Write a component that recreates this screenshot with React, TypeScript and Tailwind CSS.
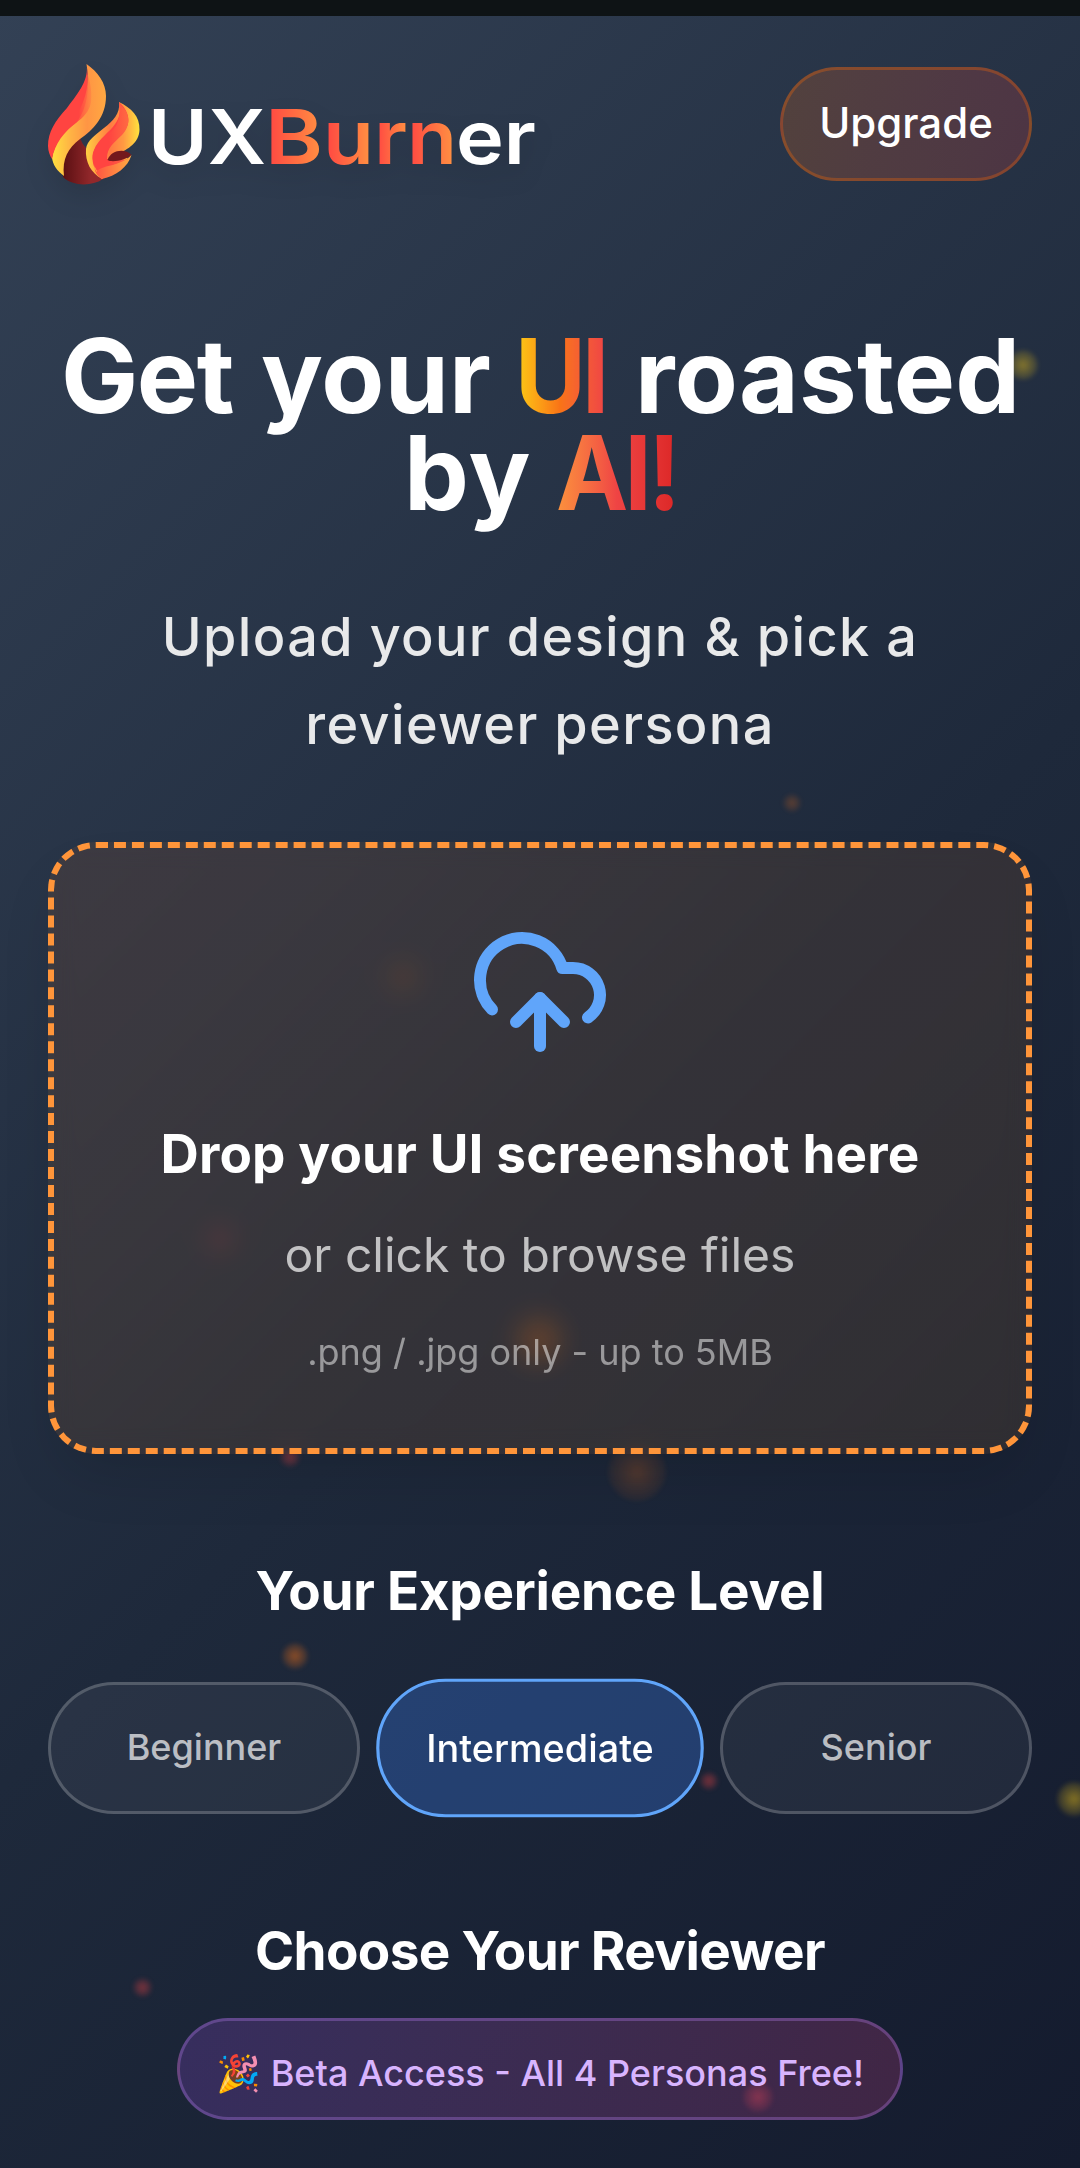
import { useState } from "react";
import { CloudUpload } from "lucide-react";

const levels = ["Beginner", "Intermediate", "Senior"];

// Embers floating behind the content: centre, diameter and tint.
const embers = [
  { x: 1023, y: 365, size: 30, color: "rgba(250,204,21,0.45)" },
  { x: 792, y: 803, size: 18, color: "rgba(249,115,22,0.28)" },
  { x: 403, y: 977, size: 36, color: "rgba(249,115,22,0.16)" },
  { x: 220, y: 1239, size: 28, color: "rgba(239,68,68,0.25)" },
  { x: 539, y: 1340, size: 54, color: "rgba(249,115,22,0.32)" },
  { x: 290, y: 1457, size: 20, color: "rgba(239,68,68,0.42)" },
  { x: 637, y: 1472, size: 58, color: "rgba(249,115,22,0.24)" },
  { x: 295, y: 1656, size: 26, color: "rgba(249,115,22,0.5)" },
  { x: 709, y: 1781, size: 18, color: "rgba(239,68,68,0.45)" },
  { x: 1074, y: 1799, size: 34, color: "rgba(250,204,21,0.48)" },
  { x: 142, y: 1987, size: 19, color: "rgba(239,68,68,0.45)" },
  { x: 758, y: 2097, size: 30, color: "rgba(239,68,68,0.42)" },
];

export default function App() {
  const [level, setLevel] = useState("Intermediate");

  return (
    <div className="relative h-[2168px] w-[1080px] overflow-hidden bg-[linear-gradient(135deg,#334155_0%,#1e293b_55%,#141b2e_100%)] font-['Inter',sans-serif] text-white">
      <Embers />
      <div className="relative h-4 bg-[#0e1315]" />

      <header className="relative flex h-[214px] items-start justify-between px-12 pt-[48px]">
        <Logo />
        <button className="mt-[3px] h-[114px] w-[252px] rounded-full border-[3px] border-orange-500/30 bg-linear-to-r from-[#f97316]/20 to-[#ef4444]/20 pb-[3px] text-[42px] font-medium">
          Upgrade
        </button>
      </header>

      <main className="relative px-12 text-center">
        <h1 className="mt-[97px] text-[103px] leading-[97px] font-bold whitespace-nowrap">
          <span className="flex justify-center">
            <span className="w-[200px] text-left tracking-[-1.5px]">Get</span>
            <span className="w-[254px] text-left tracking-[0.2px]">your</span>
            <span className="w-[120px] text-left">
              <span className="inline-block origin-left scale-x-[0.94] bg-linear-to-r from-[#facc15] via-[#f97316] to-[#ef4444] bg-clip-text tracking-[-4px] text-transparent">UI</span>
            </span>
            <span className="w-[384px] text-left tracking-[0.2px]">roasted</span>
          </span>
          <span className="flex justify-center">
            <span className="w-[152px] text-left tracking-[1.5px]">by</span>
            <span className="w-[120px] text-left">
              <span className="inline-block origin-left scale-x-[0.94] bg-linear-to-r from-[#fb923c] via-[#ef4444] to-[#dc2626] bg-clip-text tracking-[-4px] text-transparent">AI!</span>
            </span>
          </span>
        </h1>

        <p className="mx-auto mt-[72px] w-[820px] text-[54px] leading-[87.75px] font-medium tracking-[0.025em] text-[#e8e9ea]">
          Upload your design &amp; pick a reviewer persona
        </p>

        <div className="mt-[73px] flex h-[612px] flex-col items-center rounded-[48px] border-[6px] border-dashed border-[#ff953a] bg-linear-to-br from-[#f97316]/10 to-[#fb9a24]/10 pt-[72px] shadow-[0_30px_60px_-12px_rgba(0,0,0,0.12)] backdrop-blur-[12px]">
          <CloudUpload size={144} className="shrink-0 text-[#60a5fa]" />
          <h3 className="mt-[54px] text-[53px] leading-[72px] font-bold tracking-[0.15px] whitespace-nowrap">
            Drop your UI screenshot here
          </h3>
          <p className="mt-[29px] text-[48px] leading-[72px] text-white/70">or click to browse files</p>
          <p className="mt-[34px] text-[36px] leading-[54px] text-white/50">.png / .jpg only - up to 5MB</p>
        </div>

        <h2 className="mt-[101px] text-[53px] leading-[72px] font-bold tracking-[-0.25px]">Your Experience Level</h2>
        <div className="mt-[55px] flex gap-6">
          {levels.map((l) => (
            <button
              key={l}
              onClick={() => setLevel(l)}
              className={`h-[132px] flex-1 rounded-full border-[3px] text-[36px] font-medium ${
                l === level
                  ? "scale-105 border-[#60a5fa] bg-[#3b82f6]/30 text-white"
                  : "border-white/20 bg-white/5 pb-[2px] text-white/70"
              }`}
            >
              {l}
            </button>
          ))}
        </div>

        <h2 className="mt-[101px] text-[53px] leading-[72px] font-bold tracking-[-0.65px]">Choose Your Reviewer</h2>
        <div className="mx-auto mt-[31px] flex h-[102px] w-[726px] items-center justify-center rounded-full border-[3px] border-[#c084fc]/30 bg-linear-to-r from-[#a855f7]/20 to-[#ec4899]/20 pt-[8px] text-[36px] font-medium whitespace-nowrap text-[#d8b4fe]">
          🎉 Beta Access - All 4 Personas Free!
        </div>
      </main>
    </div>
  );
}

function Embers() {
  return (
    <div className="pointer-events-none absolute inset-0">
      {embers.map((e) => (
        <span
          key={`${e.x}-${e.y}`}
          className="absolute rounded-full blur-[2px]"
          style={{
            left: e.x - e.size / 2,
            top: e.y - e.size / 2,
            width: e.size,
            height: e.size,
            background: `radial-gradient(circle, ${e.color}, transparent 90%)`,
          }}
        />
      ))}
    </div>
  );
}

function Logo() {
  return (
    <svg width="500" height="124" viewBox="48 64 500 124" className="overflow-visible drop-shadow-[0_12px_12px_rgba(0,0,0,0.1)]">
      <defs>
        <linearGradient id="tall" x1="0" x2="1">
          <stop offset="0" stopColor="#ffe040" />
          <stop offset="0.35" stopColor="#ffb244" />
          <stop offset="0.65" stopColor="#ff9544" />
          <stop offset="1" stopColor="#ffa842" />
        </linearGradient>
        <linearGradient id="tallRed" x1="0" x2="1">
          <stop offset="0.5" stopColor="#ff4441" />
          <stop offset="1" stopColor="#ff8744" />
        </linearGradient>
        <linearGradient id="base" x1="0" x2="1">
          <stop offset="0" stopColor="#5a0f12" />
          <stop offset="0.7" stopColor="#92282b" />
        </linearGradient>
        <linearGradient id="small" x1="0" x2="1">
          <stop offset="0" stopColor="#ffd042" />
          <stop offset="0.45" stopColor="#ff7a42" />
          <stop offset="0.7" stopColor="#ff9a42" />
          <stop offset="1" stopColor="#ffe23e" />
        </linearGradient>
        <linearGradient id="smallRed" x1="0" x2="1">
          <stop offset="0.45" stopColor="#ff4441" />
          <stop offset="1" stopColor="#ff6a42" />
        </linearGradient>
        <linearGradient id="lick" x1="0" x2="1">
          <stop offset="0" stopColor="#ff5742" />
          <stop offset="1" stopColor="#ffac42" />
        </linearGradient>
        <linearGradient id="letterB" gradientUnits="userSpaceOnUse" x1="270" x2="320">
          <stop stopColor="#ff4a42" /><stop offset="1" stopColor="#ff8e42" />
        </linearGradient>
        <linearGradient id="letterU" gradientUnits="userSpaceOnUse" x1="328" x2="369">
          <stop stopColor="#ff4a42" /><stop offset="1" stopColor="#ff8e42" />
        </linearGradient>
        <linearGradient id="letterR" gradientUnits="userSpaceOnUse" x1="378" x2="406">
          <stop stopColor="#ff4a42" /><stop offset="1" stopColor="#ff8e42" />
        </linearGradient>
        <linearGradient id="letterN" gradientUnits="userSpaceOnUse" x1="411" x2="452">
          <stop stopColor="#ff4a42" /><stop offset="1" stopColor="#ff8e42" />
        </linearGradient>
      </defs>

      {/* Dark base */}
      <path d="M80 137C70 143 62 156 63 177C72 186 91 187 103 179C94 170 85 160 86 148C83 145 81 141 80 137Z" fill="url(#base)" />
      {/* Tall flame */}
      <path d="M86.500 64C98 72 106 83 106 96C106 117 93 130 80 139C68 148 62 159 64 176C57 171 53 165 52 158C54 145 63 130 72 122C83 110 91 93 86.500 64Z" fill="url(#tall)" />
      <path d="M86.500 64C89 79 80 91 67 108C55 121 48 132 48 146C48 151 50 156 52 159C55 143 64 132 77 122C87 108 90 90 86.500 64Z" fill="#ff4441" />
      <path d="M87.500 74C89 95 80 112 66 131C76 122 89 116 91 102C92 90 90 81 87.500 74Z" fill="url(#tallRed)" opacity="0.8" />
      {/* Small flame */}
      <path d="M119 102C131 108 140 116 139.500 130C139 143 128 149 118 154L128 158L102 179C91 173 85 162 86 149C88 132 122 125 119 102Z" fill="url(#small)" />
      <path d="M119 102C130 112 131 124 124 131C112 141 102 145 97 158C93 166 94 173 100 177C92 167 91 156 94 150C98 139 110 132 115 124C120 117 121 111 119 102Z" fill="#ff4441" />
      <path d="M119 103C131 113 131 126 122 135C114 143 107 147 107 159L128 160L97 171C91 161 92 153 96 147C101 139 111 134 116 126C120 118 120 112 119 103Z" fill="url(#smallRed)" />
      <path d="M107.500 160C111 150 125 148 131.500 155C126 160 112 163 107.500 160Z" fill="#74191d" />
      <path d="M131.500 155C128 167 116 176 102 179C98 176 96 173 97 171C105 164 120 167 131.500 155Z" fill="url(#lick)" />

      <text y="163.500" fontFamily="Inter, sans-serif" fontSize="75" fontWeight="600" fill="#fff">
        <tspan x="148" textLength="118" lengthAdjust="spacingAndGlyphs">UX</tspan>
        <tspan x="265" textLength="58" lengthAdjust="spacingAndGlyphs" fill="url(#letterB)">B</tspan>
        <tspan x="323" textLength="51" lengthAdjust="spacingAndGlyphs" fill="url(#letterU)">u</tspan>
        <tspan x="374" textLength="33" lengthAdjust="spacingAndGlyphs" fill="url(#letterR)">r</tspan>
        <tspan x="407" textLength="50" lengthAdjust="spacingAndGlyphs" fill="url(#letterN)">n</tspan>
        <tspan x="456" textLength="80" lengthAdjust="spacingAndGlyphs">er</tspan>
      </text>
    </svg>
  );
}
